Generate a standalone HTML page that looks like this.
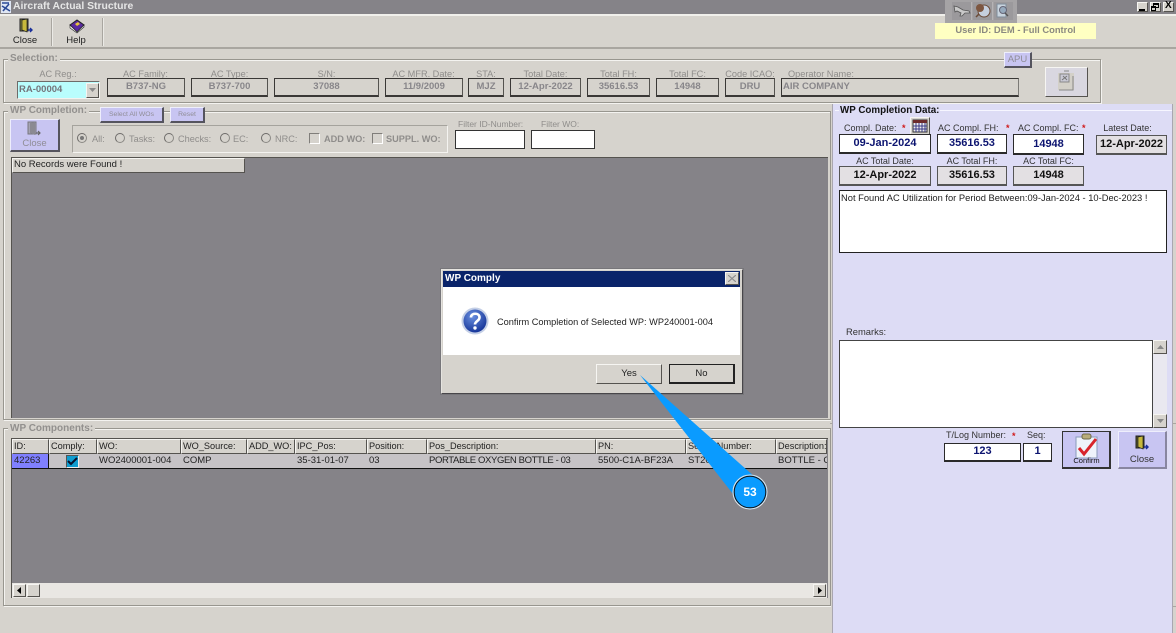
<!DOCTYPE html>
<html><head><meta charset="utf-8"><title>Aircraft Actual Structure</title>
<style>
html,body{margin:0;padding:0;background:#d6d3cd}
#r{position:relative;width:1176px;height:633px;overflow:hidden;background:#d6d3cd;font-family:"Liberation Sans",sans-serif;font-size:10px;color:#000}
#r div,#r svg{position:absolute;box-sizing:border-box}
.t{white-space:nowrap;line-height:12px;height:12px}
.c{text-align:center}
.g{color:#8f8d8b;font-size:9.2px}
.p{color:#333;font-size:9px}
.b{font-weight:bold}
.leg{background:#d6d3cd;font-weight:bold;color:#92908e;font-size:10px;padding:0 2px;white-space:nowrap;line-height:12px;height:12px}
.grp{border:1px solid #98968f;box-shadow:1px 1px 0 #f4f3f0,inset 1px 1px 0 #f4f3f0}
.f{border:1px solid #3a3836;color:#88868a;font-weight:bold;text-align:center;line-height:16px;font-size:9.5px;border-right-color:#55534f;border-bottom-width:2px;white-space:nowrap;overflow:hidden}
.w{background:#fff;border:1px solid #2a2a2a;border-bottom-width:2px;color:#0c1470;font-weight:bold;text-align:center;font-size:11px;line-height:16px;white-space:nowrap}
.e{background:#e3e0e3;color:#111;border:1px solid #555;border-bottom-width:2px;font-weight:bold;text-align:center;font-size:11px;line-height:16px;white-space:nowrap}
.btn{background:#c8c5f2;border:1px solid #eeeefc;border-right:2px solid #55545e;border-bottom:2px solid #55545e;color:#8f8d96;text-align:center}
.h{background:#d6d3cd;border:1px solid;border-color:#f6f5f2 #55534f #55534f #f6f5f2;height:15px;top:439px;line-height:13px;padding-left:1px;font-size:9.2px;color:#222;white-space:nowrap;overflow:hidden}
.cell{top:455px;height:12px;line-height:12px;font-size:9.5px;color:#222;white-space:nowrap;overflow:hidden}
.sb{background:#d6d3cd;border:1px solid;border-color:#f6f5f2 #55534f #55534f #f6f5f2}
.rad{width:10px;height:10px;border-radius:50%;border:1px solid #8a8884;border-top-color:#6c6a68;border-left-color:#6c6a68;background:#d6d3cd;top:133px}
.chk{width:11px;height:11px;border:1px solid #807e7a;border-right-color:#fff;border-bottom-color:#fff;background:#d6d3cd;top:133px}
</style></head><body><div id="r">

<!-- title bar -->
<div style="left:0;top:0;width:1176px;height:14px;background:#858388"></div>
<div style="left:0;top:14px;width:1176px;height:2px;background:#f0efeb"></div>
<svg style="left:0;top:0" width="13" height="14" viewBox="0 0 13 14"><rect x="1" y="1" width="10" height="12" fill="#dfe6f4"/><path d="M2 3h7M2 6l8 5M9 4L3 11" stroke="#2c4a96" stroke-width="1.6" fill="none"/></svg>
<div class="t b" style="left:13px;top:1px;color:#e6e6e6;font-size:10.4px">Aircraft Actual Structure</div>

<!-- window buttons -->
<div class="sb" style="left:1137px;top:2px;width:11px;height:10px"></div><div style="left:1139px;top:9px;width:6px;height:2px;background:#000"></div>
<div class="sb" style="left:1150px;top:2px;width:11px;height:10px"></div><div style="left:1153px;top:3px;width:6px;height:5px;border:1px solid #000;border-top-width:2px"></div><div style="left:1151px;top:6px;width:5px;height:5px;border:1px solid #000;border-top-width:2px;background:#d6d3cd"></div>
<div class="sb" style="left:1163px;top:2px;width:11px;height:10px"></div><div class="t b" style="left:1165px;top:0;font-size:10px">X</div>

<!-- toolbar -->
<div style="left:0;top:47px;width:1176px;height:2px;background:#a9a6a0"></div>
<div style="left:51px;top:18px;width:2px;height:28px;background:#ebeae6;border-left:1px solid #a9a6a0"></div>
<div style="left:102px;top:18px;width:2px;height:28px;background:#ebeae6;border-left:1px solid #a9a6a0"></div>
<svg style="left:19px;top:18px" width="15" height="16" viewBox="0 0 15 16"><path d="M1 1h8v12H1z" fill="#7a7a3e" stroke="#222"/><path d="M3 2l5-1v13l-5-2z" fill="#c7b93c" stroke="#222" stroke-width=".7"/><path d="M9 12h4M11 10l2 2-2 2" stroke="#1a2f9a" stroke-width="1.4" fill="none"/></svg>
<div class="t c" style="left:5px;top:35px;width:40px;font-size:9.5px;color:#222">Close</div>
<svg style="left:69px;top:19px" width="16" height="15" viewBox="0 0 16 15"><path d="M1 6L8 1l7 5-7 7z" fill="#5a2aa0" stroke="#222"/><path d="M1 6v3l7 5 7-6V6l-7 7z" fill="#eee" stroke="#222" stroke-width=".6"/><path d="M6 5l3-2 2 2-3 2z" fill="#e8c43a"/></svg>
<div class="t c" style="left:56px;top:35px;width:40px;font-size:9.5px;color:#222">Help</div>

<!-- user area -->
<div style="left:945px;top:0;width:72px;height:23px;background:#a5a3a5"></div>
<div style="left:952px;top:2px;width:20px;height:18px;background:#9b999c;border-right:1px solid #b5b3b5"></div>
<div style="left:973px;top:2px;width:20px;height:18px;background:#9b999c;border-right:1px solid #b5b3b5"></div>
<div style="left:994px;top:2px;width:19px;height:18px;background:#9b999c"></div>
<svg style="left:953px;top:3px" width="18" height="16" viewBox="0 0 18 16"><path d="M1 3l4 1 5 3 6 1 1 2-5 0-3 3-2 0 1-3-4-2-2 1z" fill="#c9c9c9" stroke="#555" stroke-width=".8"/></svg>
<svg style="left:974px;top:2px" width="18" height="17" viewBox="0 0 18 17"><circle cx="10" cy="9" r="6" fill="#c6cfdd" stroke="#6b4a36" stroke-width="1"/><circle cx="6" cy="6" r="4" fill="#7d5640"/><path d="M5 12l-3 3" stroke="#6b4a36" stroke-width="1.500"/></svg>
<svg style="left:994px;top:2px" width="18" height="17" viewBox="0 0 18 17"><path d="M3 2h9v13H3z" fill="#c8d4de" stroke="#7f8d9a"/><circle cx="9" cy="8" r="3.500" fill="#96aabd" stroke="#667"/><path d="M11 11l3 3" stroke="#555" stroke-width="1.400"/></svg>
<div style="left:935px;top:23px;width:161px;height:16px;background:#ffffc2"></div>
<div class="t c b" style="left:935px;top:24px;width:161px;color:#8a8980;font-size:9.4px">User ID: DEM - Full Control</div>

<!-- Selection -->
<div class="grp" style="left:3px;top:59px;width:1098px;height:44px"></div>
<div class="leg" style="left:8px;top:53px">Selection:</div>
<div class="t c g" style="left:23px;top:68px;width:70px">AC Reg.:</div>
<div class="t c g" style="left:107px;top:68px;width:77px">AC Family:</div>
<div class="t c g" style="left:191px;top:68px;width:77px">AC Type:</div>
<div class="t c g" style="left:274px;top:68px;width:105px">S/N:</div>
<div class="t c g" style="left:385px;top:68px;width:77px">AC MFR. Date:</div>
<div class="t c g" style="left:468px;top:68px;width:36px">STA:</div>
<div class="t c g" style="left:510px;top:68px;width:71px">Total Date:</div>
<div class="t c g" style="left:587px;top:68px;width:63px">Total FH:</div>
<div class="t c g" style="left:656px;top:68px;width:63px">Total FC:</div>
<div class="t c g" style="left:725px;top:68px;width:50px">Code ICAO:</div>
<div class="t g" style="left:788px;top:68px">Operator Name:</div>

<div style="left:17px;top:81px;width:83px;height:18px;background:#b9fdfd;border:1px solid #6e6c6a;border-right-color:#f4f3f0;border-bottom-color:#f4f3f0"></div>
<div class="t b" style="left:19px;top:84px;color:#74747a;font-size:9.5px">RA-00004</div>
<div class="sb" style="left:86px;top:83px;width:13px;height:15px"></div>
<svg style="left:89px;top:88px" width="7" height="4"><path d="M0 0h7L3.500 4z" fill="#8a8a8a"/></svg>
<div class="f" style="left:107px;top:78px;width:78px;height:19px">B737-NG</div>
<div class="f" style="left:191px;top:78px;width:77px;height:19px">B737-700</div>
<div class="f" style="left:274px;top:78px;width:105px;height:19px">37088</div>
<div class="f" style="left:385px;top:78px;width:78px;height:19px">11/9/2009</div>
<div class="f" style="left:468px;top:78px;width:36px;height:19px">MJZ</div>
<div class="f" style="left:510px;top:78px;width:71px;height:19px">12-Apr-2022</div>
<div class="f" style="left:587px;top:78px;width:63px;height:19px">35616.53</div>
<div class="f" style="left:656px;top:78px;width:63px;height:19px">14948</div>
<div class="f" style="left:725px;top:78px;width:50px;height:19px">DRU</div>
<div class="f" style="left:781px;top:78px;width:238px;height:19px;text-align:left;padding-left:1px;border-right-color:#7c7a76">AIR COMPANY</div>

<div class="btn" style="left:1004px;top:52px;width:28px;height:16px;line-height:13px;font-size:9.5px">APU</div>
<div class="sb" style="left:1045px;top:67px;width:43px;height:30px;background:#d9d7e0"></div>
<svg style="left:1055px;top:69px" width="24" height="24" viewBox="0 0 24 24"><path d="M3 4h16v17H3z" fill="#d3d0c8"/><path d="M9 2h5M18 7v14H4" stroke="#888" fill="none"/><rect x="5" y="5" width="9" height="8" fill="#c9c9d4" stroke="#888"/><path d="M7 11l5-4M8 7l4 4" stroke="#777"/></svg>

<!-- WP Completion -->
<div class="grp" style="left:3px;top:111px;width:828px;height:309px"></div>
<div class="leg" style="left:8px;top:105px">WP Completion:</div>
<div class="btn" style="left:100px;top:107px;width:64px;height:16px;line-height:13px;font-size:6.8px">Select All WOs</div>
<div class="btn" style="left:170px;top:107px;width:35px;height:16px;line-height:13px;font-size:6.8px">Reset</div>
<div class="btn" style="left:10px;top:119px;width:50px;height:33px;line-height:12px;padding-top:18px;font-size:9.5px">Close</div>
<svg style="left:27px;top:121px" width="15" height="16" viewBox="0 0 15 16"><path d="M1 1h8v12H1z" fill="#a4a3b2" stroke="#77767f"/><path d="M3 2l5-1v13l-5-2z" fill="#8b8a92"/><path d="M9 12h4M11 10l2 2-2 2" stroke="#666" stroke-width="1.200" fill="none"/></svg>

<div style="left:72px;top:125px;width:376px;height:28px;border:1px solid #a5a39d;border-right-color:#f4f3f0;border-bottom-color:#f4f3f0"></div>
<div class="rad" style="left:77px"></div><div style="left:80px;top:136px;width:4px;height:4px;border-radius:50%;background:#777"></div>
<div class="rad" style="left:115px"></div><div class="rad" style="left:164px"></div><div class="rad" style="left:220px"></div><div class="rad" style="left:261px"></div>
<div class="t g" style="left:92px;top:133px">All:</div>
<div class="t g" style="left:129px;top:133px">Tasks:</div>
<div class="t g" style="left:178px;top:133px">Checks:</div>
<div class="t g" style="left:233px;top:133px">EC:</div>
<div class="t g" style="left:275px;top:133px">NRC:</div>
<div class="chk" style="left:309px"></div><div class="t g b" style="left:324px;top:133px">ADD WO:</div>
<div class="chk" style="left:372px"></div><div class="t g b" style="left:386px;top:133px">SUPPL. WO:</div>
<div class="t g" style="left:458px;top:118px;font-size:8.5px">Filter ID-Number:</div>
<div class="t g" style="left:541px;top:118px;font-size:8.5px">Filter WO:</div>
<div style="left:455px;top:130px;width:70px;height:19px;background:#fff;border:1px solid #333"></div>
<div style="left:531px;top:130px;width:64px;height:19px;background:#fff;border:1px solid #333"></div>

<div style="left:11px;top:157px;width:817px;height:261px;background:#858388;border-top:1px solid #55534f;border-left:1px solid #55534f"></div>
<div class="sb" style="left:12px;top:158px;width:233px;height:15px;line-height:12px;padding-left:1px;font-size:9.5px;color:#222">No Records were Found !</div>

<!-- WP Components -->
<div class="grp" style="left:3px;top:428px;width:828px;height:178px"></div>
<div class="leg" style="left:8px;top:423px">WP Components:</div>
<div style="left:11px;top:438px;width:817px;height:160px;background:#858388;border-top:1px solid #55534f;border-left:1px solid #55534f"></div>

<div class="h" style="left:12px;width:37px">ID:</div>
<div class="h" style="left:49px;width:48px">Comply:</div>
<div class="h" style="left:97px;width:84px">WO:</div>
<div class="h" style="left:181px;width:66px">WO_Source:</div>
<div class="h" style="left:247px;width:48px">ADD_WO:</div>
<div class="h" style="left:295px;width:72px">IPC_Pos:</div>
<div class="h" style="left:367px;width:60px">Position:</div>
<div class="h" style="left:427px;width:169px">Pos_Description:</div>
<div class="h" style="left:596px;width:90px">PN:</div>
<div class="h" style="left:686px;width:90px">Serial_Number:</div>
<div class="h" style="left:776px;width:51px">Description:</div>

<div style="left:12px;top:454px;width:815px;height:15px;background:#c6c3c6;border-bottom:1px solid #111"></div>
<div style="left:12px;top:454px;width:37px;height:14px;background:#8080ff;border-right:1px solid #111"></div>
<div class="cell" style="left:14px;width:34px">42263</div>
<div style="left:66px;top:455px;width:13px;height:13px;background:#0f9ccf;border:1px solid #555;border-right-color:#eee;border-bottom-color:#eee"></div>
<svg style="left:67px;top:456px" width="11" height="11" viewBox="0 0 11 11"><path d="M1 5l3 3 6-6" stroke="#06122f" stroke-width="2" fill="none"/></svg>
<div class="cell" style="left:99px;width:80px">WO2400001-004</div>
<div class="cell" style="left:183px;width:60px">COMP</div>
<div class="cell" style="left:297px;width:68px">35-31-01-07</div>
<div class="cell" style="left:369px;width:50px">03</div>
<div class="cell" style="left:429px;width:165px;letter-spacing:-.38px">PORTABLE OXYGEN BOTTLE - 03</div>
<div class="cell" style="left:598px;width:86px">5500-C1A-BF23A</div>
<div class="cell" style="left:688px;width:86px">ST2001</div>
<div class="cell" style="left:778px;width:49px">BOTTLE - C</div>

<div style="left:12px;top:583px;width:815px;height:15px;background:#e9e7e3"></div>
<div class="sb" style="left:13px;top:584px;width:13px;height:13px"></div>
<svg style="left:17px;top:587px" width="4" height="7"><path d="M4 0v7L0 3.500z" fill="#000"/></svg>
<div class="sb" style="left:27px;top:584px;width:13px;height:13px"></div>
<div class="sb" style="left:813px;top:584px;width:13px;height:13px"></div>
<svg style="left:818px;top:587px" width="4" height="7"><path d="M0 0v7l4-3.500z" fill="#000"/></svg>

<!-- right panel -->
<div style="left:831px;top:104px;width:345px;height:529px;background:#d6d3cd"></div>
<div style="left:830px;top:423px;width:3px;height:1px;background:#a9a6a0"></div>
<div style="left:1173px;top:423px;width:3px;height:1px;background:#a9a6a0"></div>
<div style="left:1173px;top:606px;width:3px;height:1px;background:#a9a6a0"></div>
<div style="left:832px;top:104px;width:341px;height:529px;background:#dddcf5;border-left:1px solid #a9a6b0;border-right:1px solid #a9a6b0"></div>
<div style="left:835px;top:110px;width:337px;height:1px;background:#f6f6ff"></div>
<div class="t b" style="left:839px;top:105px;font-size:9.8px;background:#dddcf5;padding:0 1px;color:#111">WP Completion Data:</div>

<div class="t p" style="left:844px;top:122px">Compl. Date:</div>
<div class="t b" style="left:902px;top:122px;color:#d01818;font-size:9px">*</div>
<div class="sb" style="left:910px;top:117px;width:20px;height:18px"></div>
<svg style="left:912px;top:119px" width="16" height="14" viewBox="0 0 16 14"><rect x="1" y="1" width="14" height="12" fill="#eee" stroke="#333"/><rect x="1" y="1" width="14" height="3" fill="#6c2c2c"/><path d="M4 4v9M7 4v9M10 4v9M13 4v9M1 7h14M1 10h14" stroke="#3a3a86"/></svg>
<div class="t p" style="left:938px;top:122px">AC Compl. FH:</div>
<div class="t b" style="left:1006px;top:122px;color:#d01818;font-size:9px">*</div>
<div class="t p" style="left:1018px;top:122px">AC Compl. FC:</div>
<div class="t b" style="left:1082px;top:122px;color:#d01818;font-size:9px">*</div>
<div class="t c p" style="left:1092px;top:122px;width:71px">Latest Date:</div>

<div class="w" style="left:839px;top:134px;width:92px;height:20px">09-Jan-2024</div>
<div class="w" style="left:937px;top:134px;width:70px;height:20px">35616.53</div>
<div class="w" style="left:1013px;top:134px;width:71px;height:21px;line-height:18px">14948</div>
<div class="e" style="left:1096px;top:135px;width:71px;height:20px">12-Apr-2022</div>

<div class="t c p" style="left:839px;top:155px;width:92px">AC Total Date:</div>
<div class="t c p" style="left:937px;top:155px;width:70px">AC Total FH:</div>
<div class="t c p" style="left:1013px;top:155px;width:71px">AC Total FC:</div>
<div class="e" style="left:839px;top:166px;width:92px;height:20px">12-Apr-2022</div>
<div class="e" style="left:937px;top:166px;width:70px;height:20px">35616.53</div>
<div class="e" style="left:1013px;top:166px;width:71px;height:20px">14948</div>

<div style="left:839px;top:190px;width:328px;height:63px;background:#fff;border:1px solid #222;padding:1px 1px;line-height:12px;font-size:9.35px;color:#222;white-space:nowrap">Not Found AC Utilization for Period Between:09-Jan-2024 - 10-Dec-2023 !</div>

<div class="t p" style="left:846px;top:326px;font-size:9.4px">Remarks:</div>
<div style="left:839px;top:340px;width:314px;height:88px;background:#fff;border:1px solid #444"></div>
<div style="left:1153px;top:340px;width:14px;height:88px;background:#e9e8f0"></div>
<div class="sb" style="left:1153px;top:340px;width:14px;height:14px"></div>
<svg style="left:1157px;top:345px" width="7" height="4"><path d="M0 4h7L3.500 0z" fill="#888"/></svg>
<div class="sb" style="left:1153px;top:414px;width:14px;height:14px"></div>
<svg style="left:1157px;top:419px" width="7" height="4"><path d="M0 0h7L3.500 4z" fill="#888"/></svg>

<div class="t p" style="left:946px;top:429px">T/Log Number:</div>
<div class="t b" style="left:1012px;top:430px;color:#d01818;font-size:9px">*</div>
<div class="t p" style="left:1027px;top:429px">Seq:</div>
<div class="w" style="left:944px;top:443px;width:77px;height:19px;line-height:15px">123</div>
<div class="w" style="left:1023px;top:443px;width:29px;height:19px;line-height:15px">1</div>

<div style="left:1062px;top:431px;width:49px;height:38px;background:#c8c5f2;border:1px solid #333;border-right-width:2px;border-bottom-width:2px"></div>
<svg style="left:1074px;top:433px" width="26" height="26" viewBox="0 0 26 26"><rect x="2" y="4" width="21" height="21" fill="#eef3fb" stroke="#8a9abb"/><rect x="8" y="1" width="9" height="5" rx="2" fill="#b9ad7a" stroke="#6e6a4a"/><path d="M5 15l5 6L22 6" stroke="#d8242c" stroke-width="3" fill="none"/></svg>
<div class="t c" style="left:1062px;top:455px;width:49px;font-size:7.5px;color:#111">Confirm</div>
<div class="btn" style="left:1118px;top:431px;width:49px;height:38px;line-height:12px;padding-top:22px;font-size:9.5px;color:#333;border-color:#eeeefc #8886a0 #8886a0 #eeeefc">Close</div>
<svg style="left:1135px;top:435px" width="15" height="16" viewBox="0 0 15 16"><path d="M1 1h8v12H1z" fill="#55552a" stroke="#222"/><path d="M3 2l5-1v13l-5-2z" fill="#c7b93c" stroke="#222" stroke-width=".7"/><path d="M9 12h4M11 10l2 2-2 2" stroke="#1a2f9a" stroke-width="1.400" fill="none"/></svg>

<!-- dialog -->
<div style="left:441px;top:269px;width:302px;height:125px;background:#d6d3cd;border:1px solid;border-color:#e6e4e0 #48464a #48464a #e6e4e0;box-shadow:0 0 0 1px #77767a"></div>
<div style="left:443px;top:271px;width:297px;height:16px;background:#0a246a"></div>
<div class="t b" style="left:445px;top:273px;color:#fff;font-size:10px">WP Comply</div>
<div class="sb" style="left:725px;top:272px;width:14px;height:13px"></div>
<svg style="left:728px;top:275px" width="8" height="7"><path d="M0 0l8 7M8 0L0 7" stroke="#8d8d90" stroke-width="1.200"/></svg>
<div style="left:443px;top:287px;width:297px;height:68px;background:#fff"></div>
<svg style="left:461px;top:307px" width="28" height="28" viewBox="0 0 28 28"><defs><radialGradient id="q" cx=".4" cy=".3" r=".8"><stop offset="0" stop-color="#6a90e0"/><stop offset="1" stop-color="#0c2a90"/></radialGradient></defs><circle cx="14" cy="14" r="13.500" fill="#c4cfe6"/><circle cx="14" cy="14" r="11.500" fill="url(#q)"/><path d="M10 10.500c0-5 8.500-5 8.500 0 0 3.500-4.500 3.500-4.500 7" stroke="#fff" stroke-width="2.600" fill="none"/><circle cx="14" cy="21" r="1.700" fill="#fff"/></svg>
<div class="t" style="left:497px;top:316px;font-size:9.2px;color:#222">Confirm Completion of Selected WP: WP240001-004</div>
<div style="left:596px;top:364px;width:66px;height:20px;background:#d6d3cd;border:1px solid;border-color:#f6f5f2 #55534f #55534f #f6f5f2;text-align:center;line-height:17px;font-size:9.5px;color:#222">Yes</div>
<div style="left:669px;top:364px;width:66px;height:20px;background:#d6d3cd;border:1px solid #222;border-right-width:2px;border-bottom-width:2px;text-align:center;line-height:17px;font-size:9.5px;color:#222">No</div>

<!-- callout -->
<svg style="left:630px;top:365px" width="146" height="156" viewBox="630 365 146 156"><path d="M640 375L756 478L733 494Z" fill="#0a9bff"/><circle cx="750" cy="492" r="17" fill="#0a9bff" stroke="#e8e8e8" stroke-width="1"/><circle cx="750" cy="492" r="15.800" fill="#0a9bff" stroke="#111" stroke-width="1"/></svg>
<div class="t c b" style="left:735px;top:486px;width:30px;color:#fff;font-size:12px">53</div>

</div></body></html>
